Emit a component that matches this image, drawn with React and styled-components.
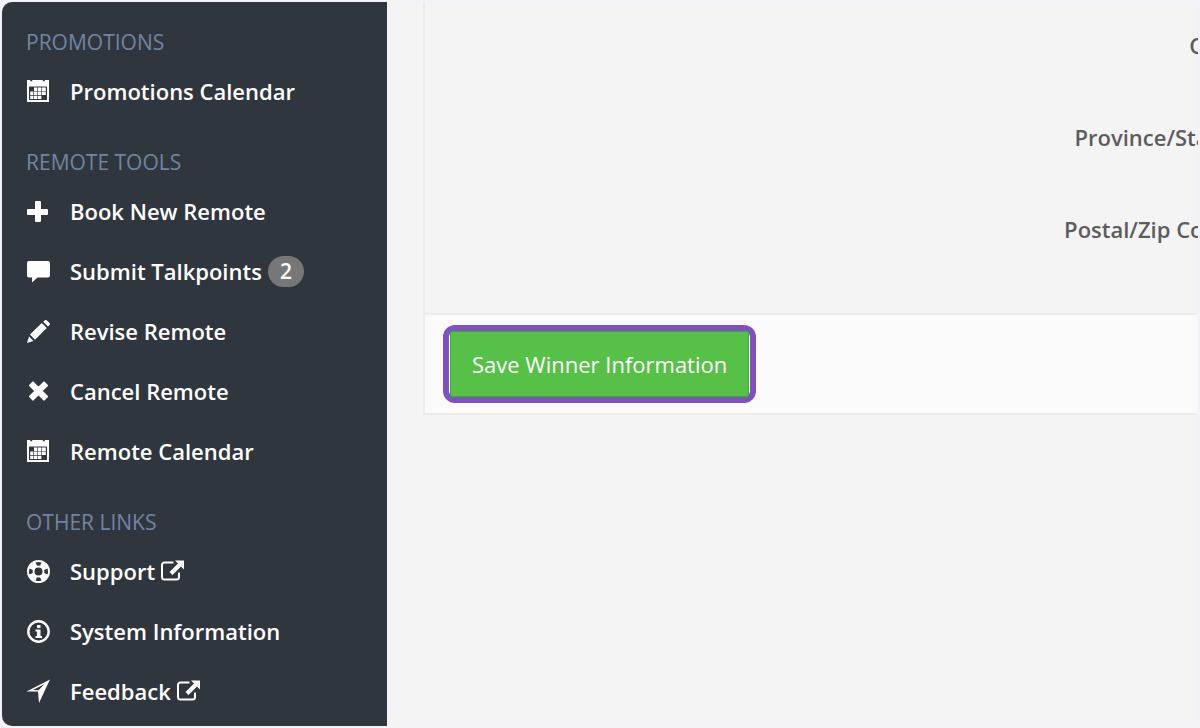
import React from "react";
import styled, { createGlobalStyle } from "styled-components";

const GlobalStyle = createGlobalStyle`
  * {
    box-sizing: border-box;
  }
  body {
    margin: 0;
    background-color: #f3f2f9;
    font-family: "Open Sans", "Noto Sans", sans-serif;
    font-size: 22px;
  }
`;

const Page = styled.div`
  display: flex;
  height: calc(100vh - 4px);
  margin: 2px;
  border-radius: 10px;
  overflow: hidden;
  background-color: #f4f4f4;
`;

const Sidebar = styled.nav`
  flex: 0 0 385px;
  background-color: #30363e;
`;

const SectionTitle = styled.h3`
  margin: 0;
  padding: 25px 24px 5px;
  font-size: 21px;
  font-weight: 400;
  line-height: 30px;
  text-transform: uppercase;
  color: #7085a0;
`;

const Menu = styled.ul`
  margin: 0;
  padding: 0;
  list-style: none;
`;

const MenuLink = styled.a`
  display: flex;
  align-items: center;
  height: 60px;
  padding: 0 24px 2px;
  font-weight: 600;
  color: #ffffff;
  text-decoration: none;
`;

const Icon = styled.svg`
  flex: none;
  width: 24px;
  height: 24px;
  margin-right: ${(props) => (props.$trailing ? "0" : "20px")};
  margin-left: ${(props) => (props.$trailing ? "5px" : "0")};
  fill: #ffffff;
`;

const Badge = styled.span`
  margin-left: 6px;
  padding: 0 12px;
  border-radius: 16px;
  background-color: #777777;
  font-size: 21px;
  line-height: 31px;
`;

const Content = styled.main`
  flex: 1;
  min-width: 0;
  padding-left: 36px;
  overflow: hidden;
`;

const Panel = styled.form`
  width: 250%;
  border-left: 2px solid #ececec;
  border-bottom: 2px solid #ececec;
`;

const FormBody = styled.div`
  padding-bottom: 35px;
`;

const FormRow = styled.div`
  display: flex;
  align-items: center;
  height: 92px;
  padding-bottom: 6px;
`;

const FormLabel = styled.label`
  width: 42%;
  padding-right: 8px;
  font-weight: 600;
  text-align: right;
  color: #5c5c5c;
`;

const FormInput = styled.input`
  width: 50%;
  height: 52px;
  padding: 0 18px;
  border: 1px solid #e5e5e5;
  font: inherit;
`;

const FormActions = styled.div`
  display: flex;
  padding: 10px 18px;
  border-top: 2px solid #ececec;
  background-color: #fafafa;
`;

const Highlight = styled.div`
  padding: 0 1px;
  border: 6px solid #804fc3;
  border-radius: 12px;
  background-color: #ffffff;
`;

const SaveButton = styled.button`
  display: block;
  height: 66px;
  padding: 0 21px;
  border: 1px solid #35b31e;
  border-radius: 2px;
  background-color: #57c046;
  font: inherit;
  color: #ffffff;
  cursor: pointer;
`;

const CalendarIcon = () => (
  <Icon viewBox="0 0 24 24">
    <path
      fillRule="evenodd"
      d="M1 1h3.200v1.300h2V1h10.600v1.300h2V1H23v22H1zM3 7.500V21h18V7.500z"
    />
    <path d="M8 8.500h3.400v3.400H8zM12 8.500h3.400v3.400H12zM16 8.500h3.800v3.400H16zM4.200 12.600h3.200V16H4.200zM8 12.600h3.400V16H8zM12 12.600h3.400V16H12zM16 12.600h3.800V16H16zM4.200 16.700h3.200V20H4.200zM8 16.700h3.400V20H8zM12 16.700h3.400V20H12z" />
  </Icon>
);

const PlusIcon = () => (
  <Icon viewBox="0 0 24 24">
    <path d="M9 3q0-1 1-1h4q1 0 1 1v7h6q1 0 1 1v4q0 1-1 1h-6v6q0 1-1 1h-4q-1 0-1-1v-6H2q-1 0-1-1v-4q0-1 1-1h7z" />
  </Icon>
);

const CommentIcon = () => (
  <Icon viewBox="0 0 24 24">
    <path d="M3 2h19q2 0 2 2v12.500q0 2-2 2H11.500L6 23.500v-5H3q-2 0-2-2V4q0-2 2-2z" />
  </Icon>
);

const PencilIcon = () => (
  <Icon viewBox="0 0 24 24">
    <path d="M1 24l2-6.500L7.500 22zM4 15.500L15.800 4l5 5L9 20.800zM17.200 2.700L19 1.200q1-.6 2 .2l2.500 2.500q.8 1 0 2L22 7.600z" />
  </Icon>
);

const CloseIcon = () => (
  <Icon viewBox="0 0 24 24">
    <path
      d="M7 3l5.500 5.500L18 3l3.500 3.500L16 12l5.500 5.500L18 21l-5.500-5.500L7 21l-3.500-3.500L9 12 3.500 6.500z"
      stroke="#fff"
      strokeWidth="1.200"
      strokeLinejoin="round"
    />
  </Icon>
);

const LifeRingIcon = () => (
  <Icon viewBox="0 0 24 24">
    <path
      fillRule="evenodd"
      d="M12.500 1a11.500 11.500 0 1 1 0 23 11.500 11.500 0 0 1 0-23zm0 7.500a4 4 0 1 0 0 8 4 4 0 0 0 0-8zM9.500 3.500l1.500 3.300q1.500-.4 3 0l1.500-3.300q-3-1-6 0zM9.500 21.500l1.500-3.300q1.500.4 3 0l1.500 3.300q-3 1-6 0zM3.500 9.500l3.300 1.500q-.4 1.500 0 3l-3.300 1.500q-1-3 0-6zM21.500 9.500l-3.300 1.500q.4 1.500 0 3l3.300 1.500q1-3 0-6z"
    />
  </Icon>
);

const InfoIcon = () => (
  <Icon viewBox="0 0 24 24">
    <circle cx="12.500" cy="12.500" r="10.200" fill="none" stroke="#fff" strokeWidth="2.400" />
    <path d="M11 6h3.500v3H11zM9.500 10.500h5v6.500H16v2H9.500v-2H11v-4.500H9.500z" />
  </Icon>
);

const SendIcon = () => (
  <Icon viewBox="0 0 24 24">
    <path fillRule="evenodd" d="M24 .500L13 24l-1-11.500L.500 12.500zM18.500 5L7 11l5.500.3z" />
  </Icon>
);

const ExternalIcon = () => (
  <Icon $trailing viewBox="0 0 24 24">
    <path
      d="M13.500 3.500H4.500Q2 3.500 2 6v12q0 2.500 2.500 2.500h12q2.500 0 2.500-2.500v-4.500"
      fill="none"
      stroke="#fff"
      strokeWidth="2"
    />
    <path d="M15 1.500h9v9l-3-3-8.500 8.500-3-3L18 4.500z" />
  </Icon>
);

const sections = [
  {
    title: "Promotions",
    items: [{ label: "Promotions Calendar", icon: CalendarIcon }],
  },
  {
    title: "Remote Tools",
    items: [
      { label: "Book New Remote", icon: PlusIcon },
      { label: "Submit Talkpoints", icon: CommentIcon, badge: 2 },
      { label: "Revise Remote", icon: PencilIcon },
      { label: "Cancel Remote", icon: CloseIcon },
      { label: "Remote Calendar", icon: CalendarIcon },
    ],
  },
  {
    title: "Other Links",
    items: [
      { label: "Support", icon: LifeRingIcon, external: true },
      { label: "System Information", icon: InfoIcon },
      { label: "Feedback", icon: SendIcon, external: true },
    ],
  },
];

const fields = [
  { id: "city", label: "City" },
  { id: "province", label: "Province/State" },
  { id: "postal", label: "Postal/Zip Code" },
];

const App = () => {
  return (
    <>
      <GlobalStyle />
      <Page>
        <Sidebar>
          {sections.map((section) => (
            <div key={section.title}>
              <SectionTitle>{section.title}</SectionTitle>
              <Menu>
                {section.items.map(({ label, icon: ItemIcon, badge, external }) => (
                  <li key={label}>
                    <MenuLink href="#">
                      <ItemIcon />
                      {label}
                      {badge && <Badge>{badge}</Badge>}
                      {external && <ExternalIcon />}
                    </MenuLink>
                  </li>
                ))}
              </Menu>
            </div>
          ))}
        </Sidebar>
        <Content>
          <Panel onSubmit={(e) => e.preventDefault()}>
            <FormBody>
              {fields.map((field) => (
                <FormRow key={field.id}>
                  <FormLabel htmlFor={field.id}>{field.label}</FormLabel>
                  <FormInput id={field.id} type="text" />
                </FormRow>
              ))}
            </FormBody>
            <FormActions>
              <Highlight>
                <SaveButton type="submit">Save Winner Information</SaveButton>
              </Highlight>
            </FormActions>
          </Panel>
        </Content>
      </Page>
    </>
  );
};

export default App;
